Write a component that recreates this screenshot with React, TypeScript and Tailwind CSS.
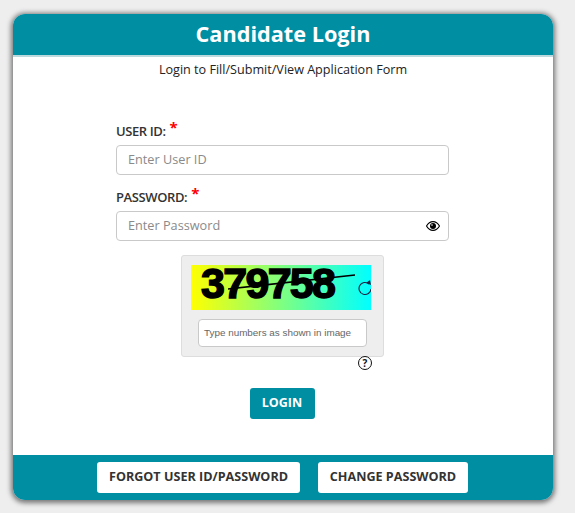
import React from 'react';

const font = { fontFamily: '"Open Sans", sans-serif' };

const Eye = () => (
  <svg width="14" height="10" viewBox="0 0 14 10">
    <path d="M0.5 5C2.2 2 4.4 0.6 7 0.6S11.8 2 13.5 5C11.8 8 9.6 9.4 7 9.4S2.2 8 0.5 5Z" fill="none" stroke="#000" strokeWidth="1.1" />
    <circle cx="7" cy="5" r="3" fill="#000" />
    <circle cx="6" cy="4" r="0.8" fill="#fff" />
  </svg>
);

const Field = ({ label, placeholder, eye }: { label: string; placeholder: string; eye?: boolean }) => (
  <div>
    <div className="flex h-[22px] items-center pt-[1px] text-[13px] font-semibold tracking-[-0.4px] text-[#333]">
      {label}
      <span className="relative -top-[4px] ml-[4px] text-[15px] leading-none font-bold text-[#f00]">*</span>
    </div>
    <div className="mt-[3px] flex h-[30px] items-center justify-between rounded-[4px] border border-[#c9c9c9] bg-white pr-[8px] pl-[11px] text-[12.7px] text-[#8a8a8a]">
      <span>{placeholder}</span>
      {eye && <Eye />}
    </div>
  </div>
);

export default function App() {
  return (
    <div className="h-[513px] bg-[#eeeeee] pt-[14px] pl-[13px]" style={font}>
      <div className="flex h-[486px] w-[540px] flex-col overflow-hidden rounded-[12px] bg-white shadow-[0_1px_5px_2px_rgba(0,0,0,0.5)]">
        <div className="flex h-[43px] shrink-0 items-center justify-center border-b-2 border-[#bcd9de] bg-[#008ea3] text-[21.7px] font-bold text-white">
          Candidate Login
        </div>
        <div className="mt-[4px] text-center text-[12.6px] leading-[18px] text-[#222]">
          Login to Fill/Submit/View Application Form
        </div>
        <div className="mt-[41px] ml-[103px] flex w-[333px] flex-col gap-[11px]">
          <Field label="USER ID:" placeholder="Enter User ID" />
          <Field label="PASSWORD:" placeholder="Enter Password" eye />
        </div>
        <div className="mt-[14px] ml-[168px] w-[203px] rounded-[3px] border border-[#dddddd] bg-[#eeeeee] px-[9px] pt-[9px] pb-[9px]">
          <div className="relative h-[45px] w-[180px] bg-linear-to-r/srgb from-[#ffff00] to-[#00ffff]">
            <span
              className="absolute top-0 left-[10px] text-[43px] leading-[37px] font-bold tracking-[-1.7px] text-black [-webkit-text-stroke:1.5px_black]"
              style={{ fontFamily: '"Liberation Sans", sans-serif' }}
            >
              379758
            </span>
            <svg className="absolute inset-0" width="180" height="45" viewBox="0 0 180 45">
              <path d="M37 24L164 10" stroke="#000" strokeWidth="1.6" />
              <path d="M178 19A6 6 0 1 0 180 24" fill="none" stroke="#224" strokeWidth="1.1" />
              <path d="M175 18L179 15L180 20Z" fill="#224" />
            </svg>
          </div>
          <div className="mt-[9px] ml-[7px] flex h-[28px] w-[169px] items-center rounded-[4px] border border-[#c9c9c9] bg-white pl-[5px] text-[9.9px] text-[#666]" style={{ fontFamily: '"Liberation Sans", sans-serif' }}>
            Type numbers as shown in image
          </div>
        </div>
        <div className="mr-[181px] flex h-0 justify-end">
          <span className="mt-[-1px] flex h-[14px] w-[14px] shrink-0 items-center justify-center rounded-full border-[1.5px] border-[#111] text-[10px] leading-none font-bold text-[#111]">
            ?
          </span>
        </div>
        <div className="mt-[31px] flex justify-center">
          <div className="flex h-[31px] w-[65px] -translate-x-px items-center justify-center rounded-[3px] bg-[#008ea3] text-[12.5px] font-bold text-white">
            LOGIN
          </div>
        </div>
        <div className="mt-auto flex h-[45px] items-center gap-[18px] bg-[#008ea3] pl-[84px] text-[12.6px] font-bold text-[#333]">
          <div className="flex h-[31px] w-[203px] items-center justify-center rounded-[3px] bg-white">FORGOT USER ID/PASSWORD</div>
          <div className="flex h-[31px] w-[150px] items-center justify-center rounded-[3px] bg-white">CHANGE PASSWORD</div>
        </div>
      </div>
    </div>
  );
}
